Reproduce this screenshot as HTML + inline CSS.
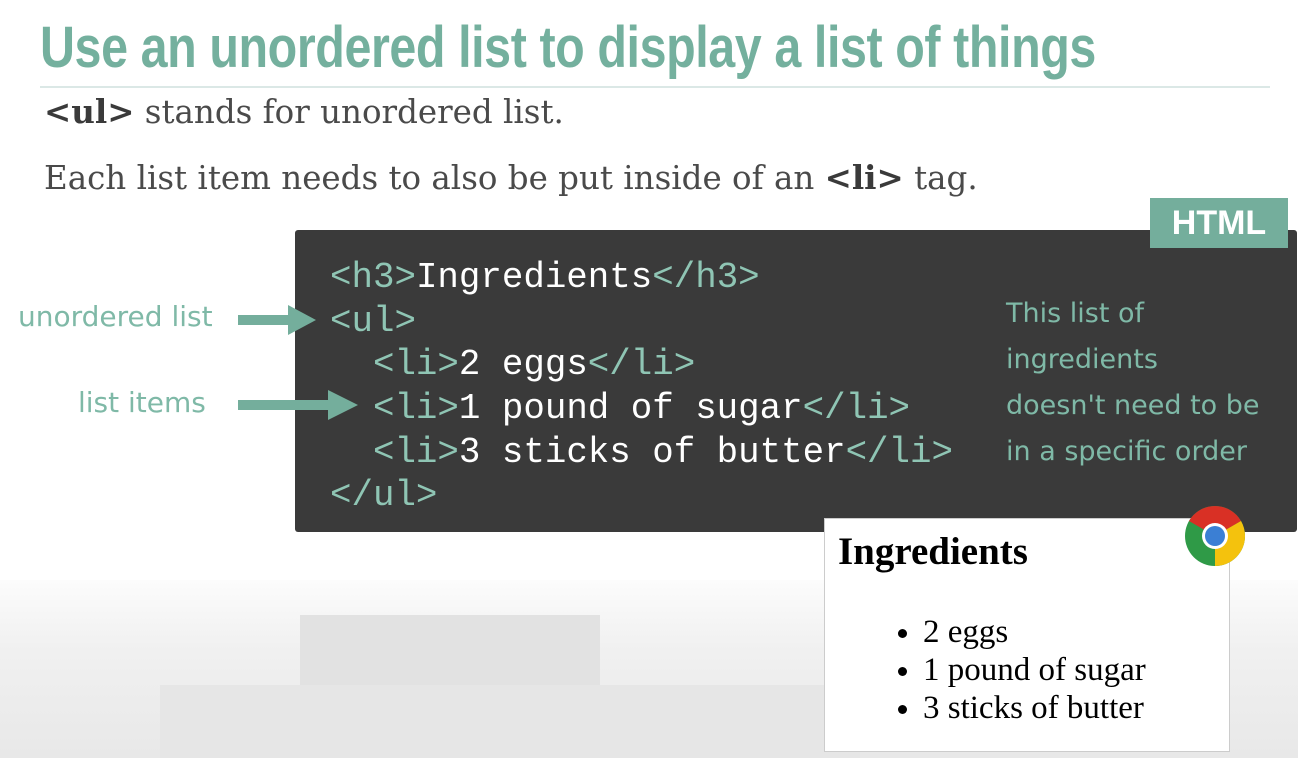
<!DOCTYPE html>
<html><head><meta charset="utf-8"><style>
*{margin:0;padding:0;box-sizing:border-box}
body{width:1298px;height:758px;overflow:hidden;position:relative;background:#fff;font-family:"Liberation Serif",serif}
.bg{position:absolute;left:0;top:580px;width:1298px;height:178px;background:linear-gradient(#fcfcfc,#f0f0f0 40%,#e8e8e8)}
.pier{position:absolute;background:#e2e2e2}
h1{position:absolute;left:40px;top:14px;font-family:"Liberation Sans Narrow","Liberation Sans",sans-serif;font-weight:bold;font-size:58px;color:#74b09e;white-space:nowrap;transform-origin:0 0;transform:scaleX(0.835);letter-spacing:-0.5px}
.rule{position:absolute;left:40px;top:86px;width:1230px;height:2px;background:#dbe8e6}
.p{position:absolute;left:44px;color:#4a4a4a;white-space:nowrap;font-family:"DejaVu Serif","Liberation Serif",serif;font-size:32.5px}
.p b{color:#3a3a3a}
.code{position:absolute;left:295px;top:230px;width:1002px;height:302px;background:#3a3a3a;border-radius:3px}
.tag{position:absolute;left:1150px;top:198px;width:138px;height:50px;background:#74ae9c;color:#fff;font-family:"Liberation Sans",sans-serif;font-weight:bold;font-size:34px;text-align:center;line-height:50px}
.cl{position:absolute;left:330px;font-family:"Liberation Mono",monospace;font-size:35.8px;color:#fff;white-space:pre;line-height:44px}
.cl i{font-style:normal;color:#8fc5b4}
.note{position:absolute;font-family:"Comic Sans MS","DejaVu Sans",sans-serif;color:#7fb9a7;font-size:27px;white-space:nowrap}
.out{position:absolute;left:824px;top:518px;width:406px;height:234px;background:#fff;border:1px solid #ccc}
.out h3{position:absolute;left:13px;top:10px;font-size:39px;font-weight:bold;color:#000}
.out ul{position:absolute;left:98px;top:94px;font-size:33px;line-height:38px;color:#000}
</style></head><body>
<div class="bg"></div>
<div class="pier" style="left:300px;top:615px;width:300px;height:70px"></div>
<div class="pier" style="left:160px;top:685px;width:700px;height:73px;background:#e6e6e6"></div>
<h1>Use an unordered list to display a list of things</h1>
<div class="rule"></div>
<div class="p" style="top:92px"><b>&lt;ul&gt;</b> stands for unordered list.</div>
<div class="p" style="top:158px">Each list item needs to also be put inside of an <b>&lt;li&gt;</b> tag.</div>
<div class="code"></div>
<div class="tag">HTML</div>
<div class="cl" style="top:256px"><i>&lt;h3&gt;</i>Ingredients<i>&lt;/h3&gt;</i></div>
<div class="cl" style="top:300px"><i>&lt;ul&gt;</i></div>
<div class="cl" style="top:343px">  <i>&lt;li&gt;</i>2 eggs<i>&lt;/li&gt;</i></div>
<div class="cl" style="top:387px">  <i>&lt;li&gt;</i>1 pound of sugar<i>&lt;/li&gt;</i></div>
<div class="cl" style="top:431px">  <i>&lt;li&gt;</i>3 sticks of butter<i>&lt;/li&gt;</i></div>
<div class="cl" style="top:474px"><i>&lt;/ul&gt;</i></div>
<div class="note" style="left:1006px;top:298px">This list of</div>
<div class="note" style="left:1006px;top:344px">ingredients</div>
<div class="note" style="left:1006px;top:390px">doesn't need to be</div>
<div class="note" style="left:1006px;top:436px">in a specific order</div>
<div class="note" style="left:18px;top:300px;font-size:28px">unordered list</div>
<div class="note" style="left:78px;top:386px;font-size:28px">list items</div>
<svg style="position:absolute;left:0;top:0" width="1298" height="758">
<rect x="238" y="315" width="55" height="10" fill="#74ae9c"/><polygon points="288,305 316,320 288,335" fill="#74ae9c"/>
<rect x="238" y="400" width="95" height="10" fill="#74ae9c"/><polygon points="328,390 358,405 328,420" fill="#74ae9c"/>
</svg>
<div class="out"><h3>Ingredients</h3><ul><li>2 eggs</li><li>1 pound of sugar</li><li>3 sticks of butter</li></ul></div>
<svg style="position:absolute;left:1184px;top:505px" width="62" height="62" viewBox="0 0 62 62">
<circle cx="31" cy="31" r="30" fill="#2f9a47"/>
<path d="M31 31 L5 16 A30 30 0 0 1 57 16 Z" fill="#d93025"/>
<path d="M31 31 L57 16 A30 30 0 0 1 31 61 Z" fill="#f4c20d"/>
<circle cx="31" cy="31" r="13" fill="#fff"/><circle cx="31" cy="31" r="10" fill="#3b7fd4"/>
</svg>
</body></html>
